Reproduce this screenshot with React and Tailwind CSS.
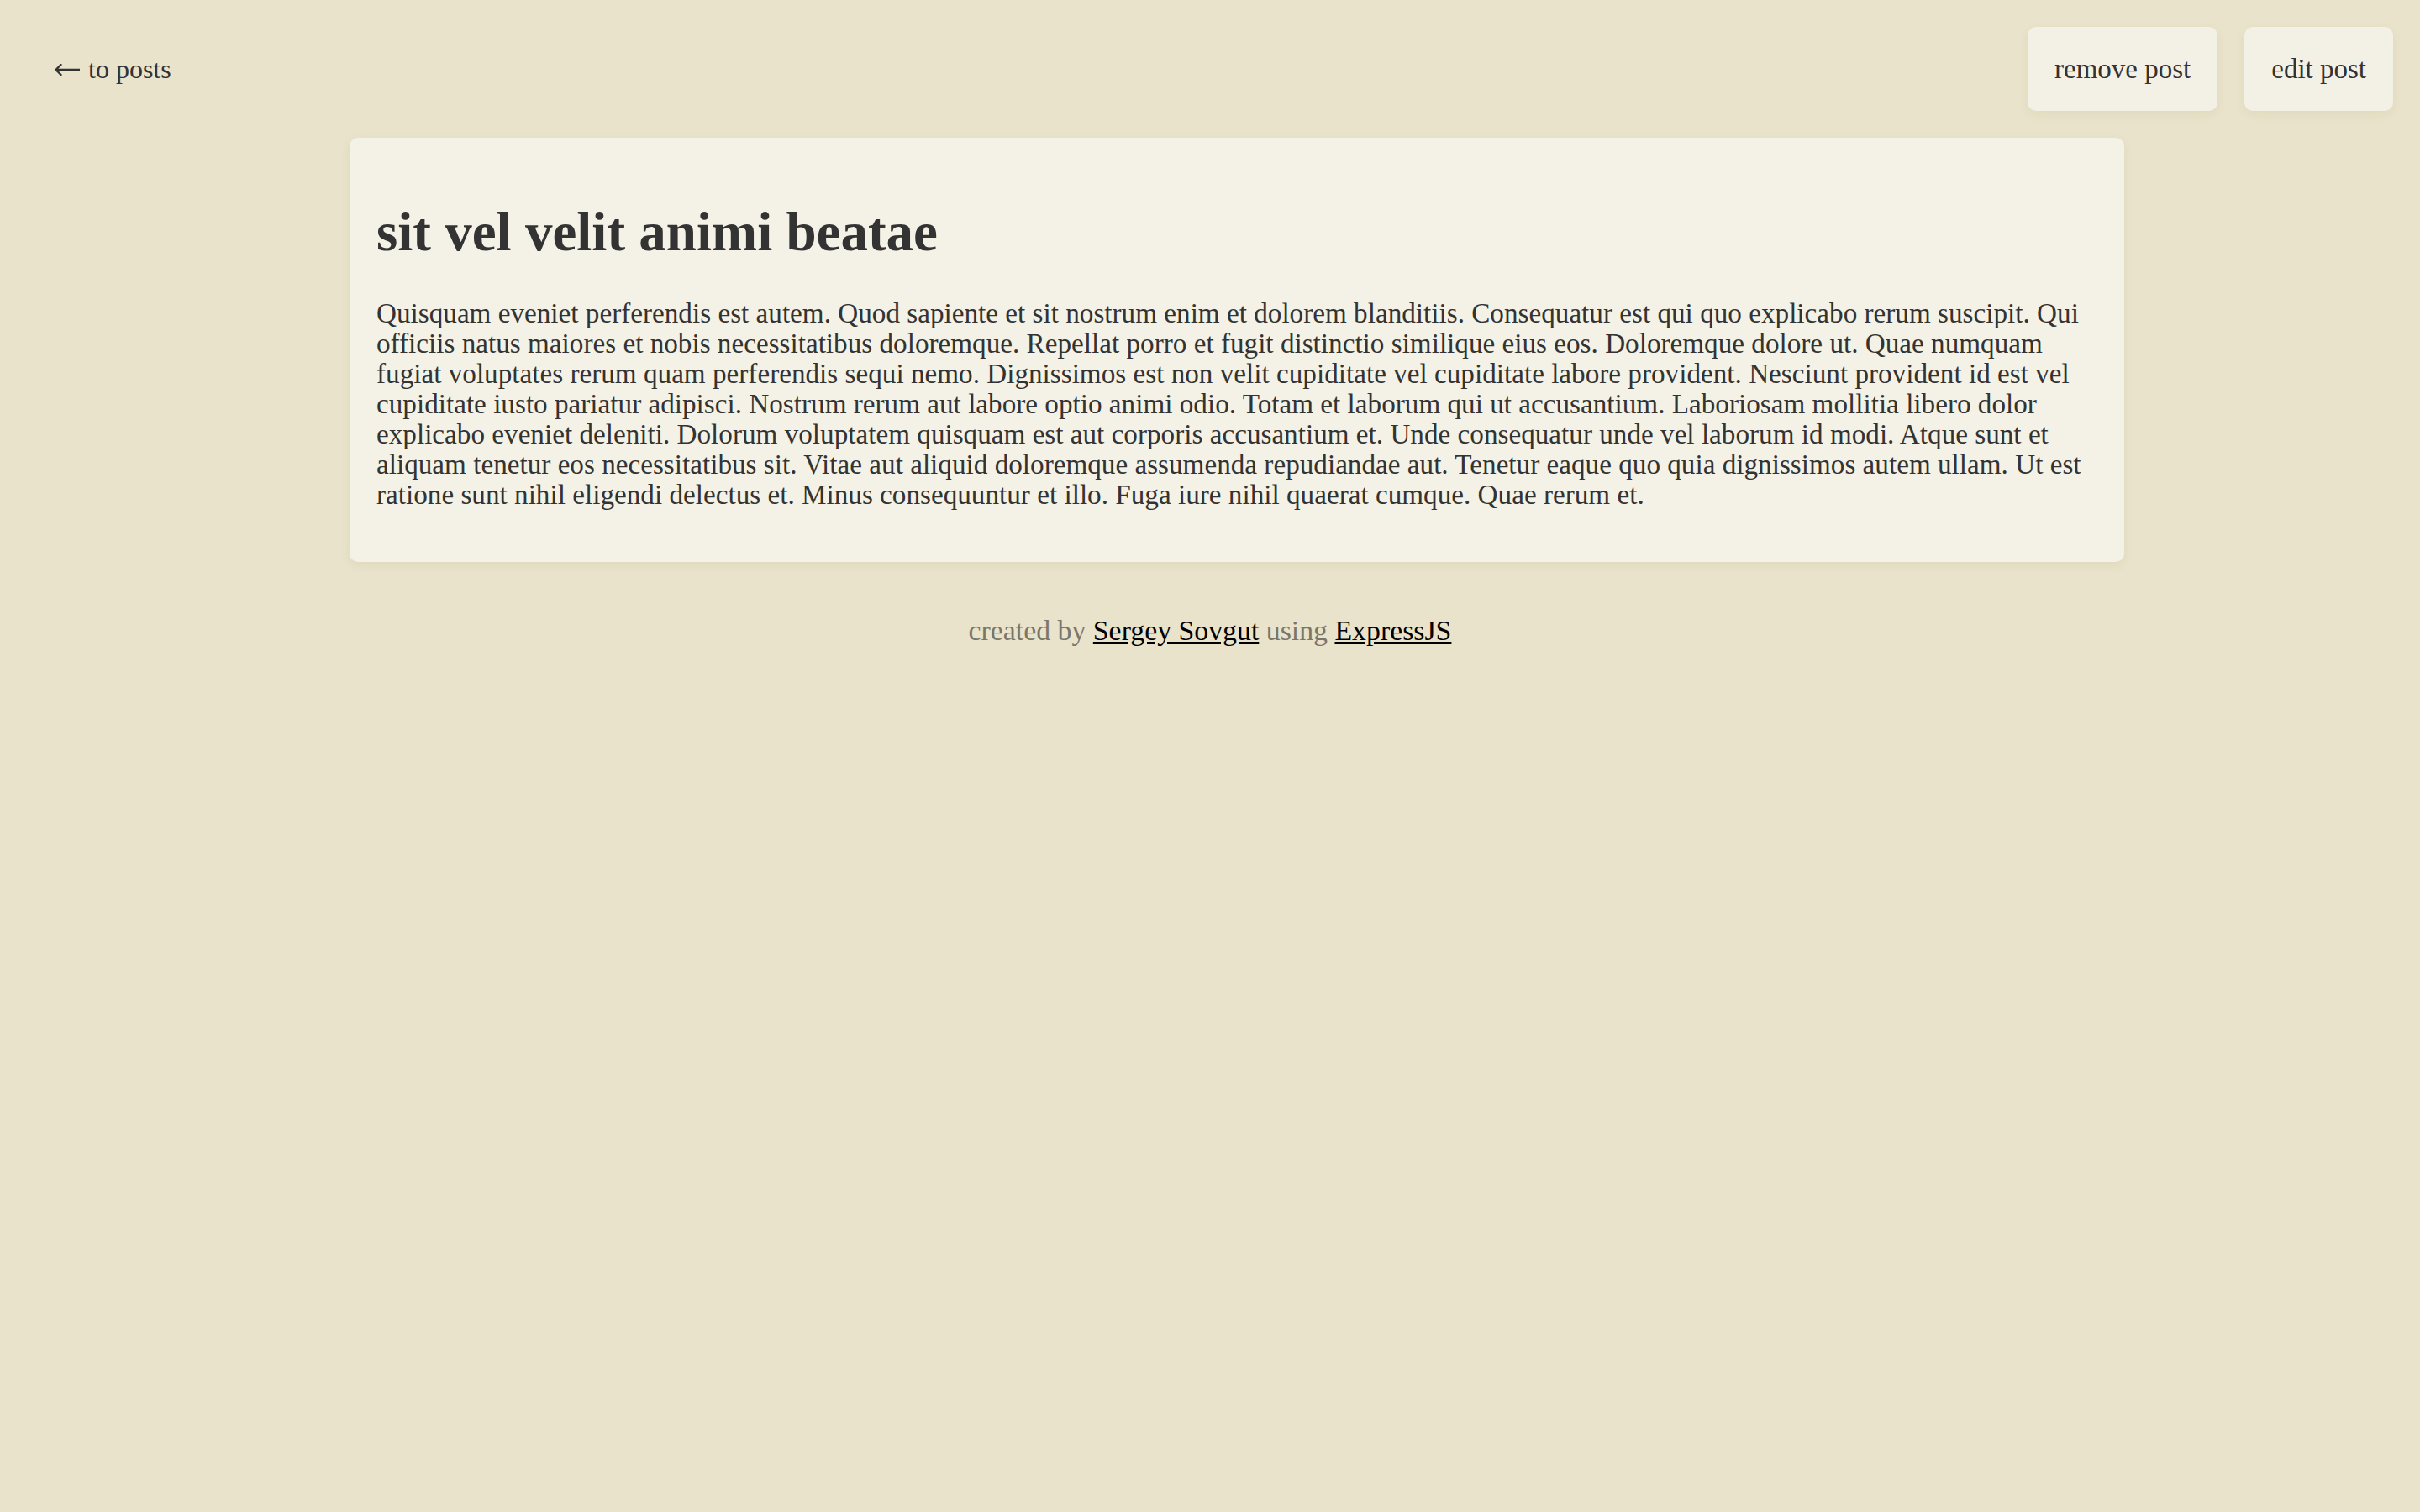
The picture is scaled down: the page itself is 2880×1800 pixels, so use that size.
import React from 'react';

const post = {
  title: 'sit vel velit animi beatae',
  body:
    'Quisquam eveniet perferendis est autem. Quod sapiente et sit nostrum enim et dolorem blanditiis. Consequatur est qui quo explicabo rerum suscipit. Qui officiis natus maiores et nobis necessitatibus doloremque. Repellat porro et fugit distinctio similique eius eos. Doloremque dolore ut. Quae numquam fugiat voluptates rerum quam perferendis sequi nemo. Dignissimos est non velit cupiditate vel cupiditate labore provident. Nesciunt provident id est vel cupiditate iusto pariatur adipisci. Nostrum rerum aut labore optio animi odio. Totam et laborum qui ut accusantium. Laboriosam mollitia libero dolor explicabo eveniet deleniti. Dolorum voluptatem quisquam est aut corporis accusantium et. Unde consequatur unde vel laborum id modi. Atque sunt et aliquam tenetur eos necessitatibus sit. Vitae aut aliquid doloremque assumenda repudiandae aut. Tenetur eaque quo quia dignissimos autem ullam. Ut est ratione sunt nihil eligendi delectus et. Minus consequuntur et illo. Fuga iure nihil quaerat cumque. Quae rerum et.',
};

const Button = ({ children }) => (
  <button className="bg-[#f3f1e5] text-[#333] px-8 py-8 rounded-[10px] text-[33px] leading-[36px] shadow-[0_4px_12px_rgba(120,100,40,0.08)]">
    {children}
  </button>
);

const App = () => {
  return (
    <div className="min-h-screen bg-[#e9e3cb] text-[#333] font-['Liberation_Serif',serif]">
      <header className="flex justify-between items-center px-8 pt-8">
        <a href="#" className="pl-[33px] flex items-center gap-[10px] text-[32px] leading-[36px] text-[#333]">
          {/* back arrow */}
          <svg width="30" height="14" viewBox="0 0 30 14" className="mt-[2px]">
            <path d="M1.5 7H30M7.5 1L1.5 7l6 6" fill="none" stroke="#333" strokeWidth="2.4" strokeLinecap="round" strokeLinejoin="round" />
          </svg>
          <span>to posts</span>
        </a>
        <div className="flex gap-8">
          <Button>remove post</Button>
          <Button>edit post</Button>
        </div>
      </header>

      <main className="ml-[416px] w-[2112px] mt-8">
        <article className="bg-[#f4f2e6] rounded-[10px] px-8 pt-[74px] pb-[62px] shadow-[0_4px_12px_rgba(120,100,40,0.08)]">
          <h1 className="text-[65px] leading-[77px] font-bold mb-[40px]">{post.title}</h1>
          <p className="text-[33.2px] leading-[36px]">{post.body}</p>
        </article>
      </main>

      <footer className="mt-16 text-center text-[33.8px] leading-[36px] text-[#7a766a]">
        created by{' '}
        <a href="#" className="text-black underline">Sergey Sovgut</a>{' '}
        using{' '}
        <a href="#" className="text-black underline">ExpressJS</a>
      </footer>
    </div>
  );
};

export default App;
